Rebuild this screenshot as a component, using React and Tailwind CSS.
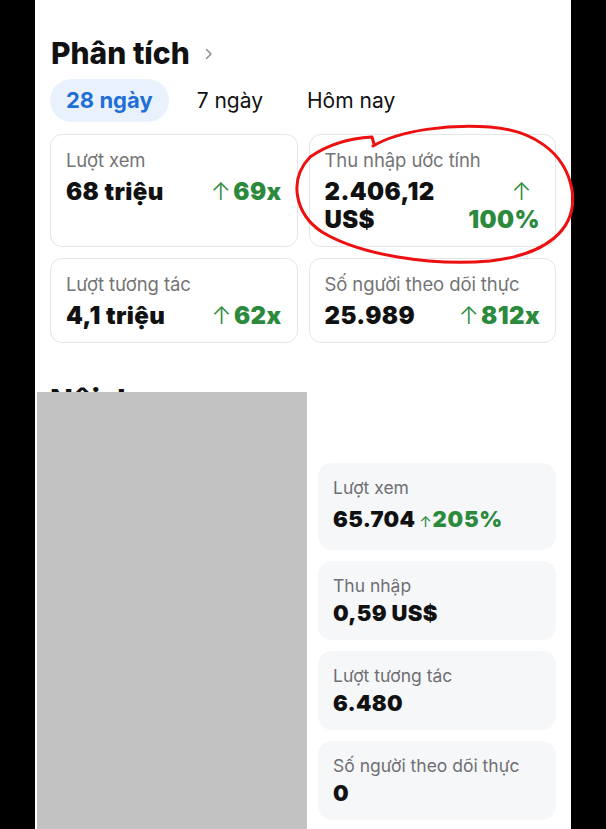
import React from 'react'

const overview = [
  { label: 'Lượt xem', value: ['68 triệu'], change: ['69x'] },
  { label: 'Thu nhập ước tính', value: ['2.406,12', 'US$'], change: ['', '100%'] },
  { label: 'Lượt tương tác', value: ['4,1 triệu'], change: ['62x'] },
  { label: 'Số người theo dõi thực', value: ['25.989'], change: ['812x'] },
]

const content = [
  { label: 'Lượt xem', value: '65.704', change: '205%', h: 'h-[87px]', gap: 'mt-[7px]' },
  { label: 'Thu nhập', value: '0,59 US$', h: 'h-[79px]', gap: 'mt-[3px]' },
  { label: 'Lượt tương tác', value: '6.480', h: 'h-[79px]', gap: 'mt-[3px]' },
  { label: 'Số người theo dõi thực', value: '0', h: 'h-[79px]', gap: 'mt-[3px]' },
]

const OverviewCard = ({ item }) => {
  const twoLines = item.value.length > 1
  return (
    <div className="rounded-[12px] border border-[#e5e5e7] bg-white px-[15px] pt-[13px] pb-[12px]">
      <div className="text-[18.5px] leading-[24px] text-[#747474] tracking-[-0.1px]">{item.label}</div>
      <div className="mt-[6px] flex justify-between text-[24px] leading-[28px] font-black tracking-[0.4px]">
        <div className="text-[#111]">
          {item.value.map((v, i) => <div key={i}>{v}</div>)}
        </div>
        <div className="text-right text-[#2b8a3c]">
          {twoLines ? (
            <>
              <div className="font-light pr-[8px]">↑</div>
              <div>{item.change[1]}</div>
            </>
          ) : (
            <div><span className="font-light mr-[2px]">↑</span>{item.change[0]}</div>
          )}
        </div>
      </div>
    </div>
  )
}

export default function App() {
  return (
    <div className="relative w-full min-h-[829px] h-[829px] overflow-hidden bg-black font-['Inter',sans-serif]">
      <div className="relative ml-[35px] w-[536px] h-full bg-white px-[15px] pt-[36px]">
        {/* Header */}
        <div className="flex items-center gap-[15px] pl-[1px]">
          <h1 className="text-[30px] leading-[34px] font-extrabold text-[#111]">Phân tích</h1>
          <svg width="8" height="12" viewBox="0 0 8 12" fill="none" className="mt-[2px]">
            <path d="M1.5 1.5L6 6L1.5 10.5" stroke="#8e8e93" strokeWidth="1.5" strokeLinecap="round" strokeLinejoin="round" />
          </svg>
        </div>

        {/* Range tabs */}
        <div className="mt-[9px] flex items-center gap-[12px] text-[21px]">
          <div className="h-[43px] px-[16px] flex items-center rounded-full bg-[#e9f2fc] text-[#1f6fd6] font-bold text-[22px]">28 ngày</div>
          <div className="h-[43px] px-[16px] flex items-center text-[#111]">7 ngày</div>
          <div className="h-[43px] px-[16px] flex items-center text-[#111]">Hôm nay</div>
        </div>

        {/* Overview grid */}
        <div className="mt-[12px] grid grid-cols-2 gap-[11px]">
          {overview.map((item, i) => <OverviewCard key={i} item={item} />)}
        </div>

        {/* Content section */}
        <h2 className="mt-[40px] text-[30px] leading-[34px] font-extrabold text-[#111]">Nội dung</h2>

        <div className="mt-[46px] flex gap-[12px]">
          <div className="w-[256px] shrink-0" />
          <div className="flex-1 flex flex-col gap-[11px]">
            {content.map((c, i) => (
              <div key={i} className={`${c.h} rounded-[14px] bg-[#f6f7f9] px-[15px] pt-[14px]`}>
                <div className="text-[17.5px] leading-[22px] text-[#6f6f73]">{c.label}</div>
                <div className={`${c.gap} text-[22px] leading-[26px] font-black text-[#111] tracking-[0.3px]`}>
                  {c.value}
                  {c.change && (
                    <span className="ml-[4px] text-[#2b8a3c] tracking-[0.8px]">
                      <span className="font-normal text-[15px]">↑</span>{c.change}
                    </span>
                  )}
                </div>
              </div>
            ))}
          </div>
        </div>

        {/* Redaction block */}
        <div className="absolute left-[2px] top-[392px] bottom-0 w-[270px] bg-[#c2c2c2]" />
      </div>

      {/* Hand-drawn highlight */}
      <svg className="absolute left-0 top-0 pointer-events-none" width="606" height="829" viewBox="0 0 606 829" fill="none">
        <path
          d="M373 146 C400 130 450 124 490 127 C530 130 565 150 572 190 C578 230 545 255 490 261 C430 266 360 255 322 232 C295 214 288 180 310 157 C330 143 355 138 372 137 L374 144"
          stroke="#ec1010"
          strokeWidth="3"
          strokeLinecap="round"
          strokeLinejoin="round"
        />
      </svg>
    </div>
  )
}
